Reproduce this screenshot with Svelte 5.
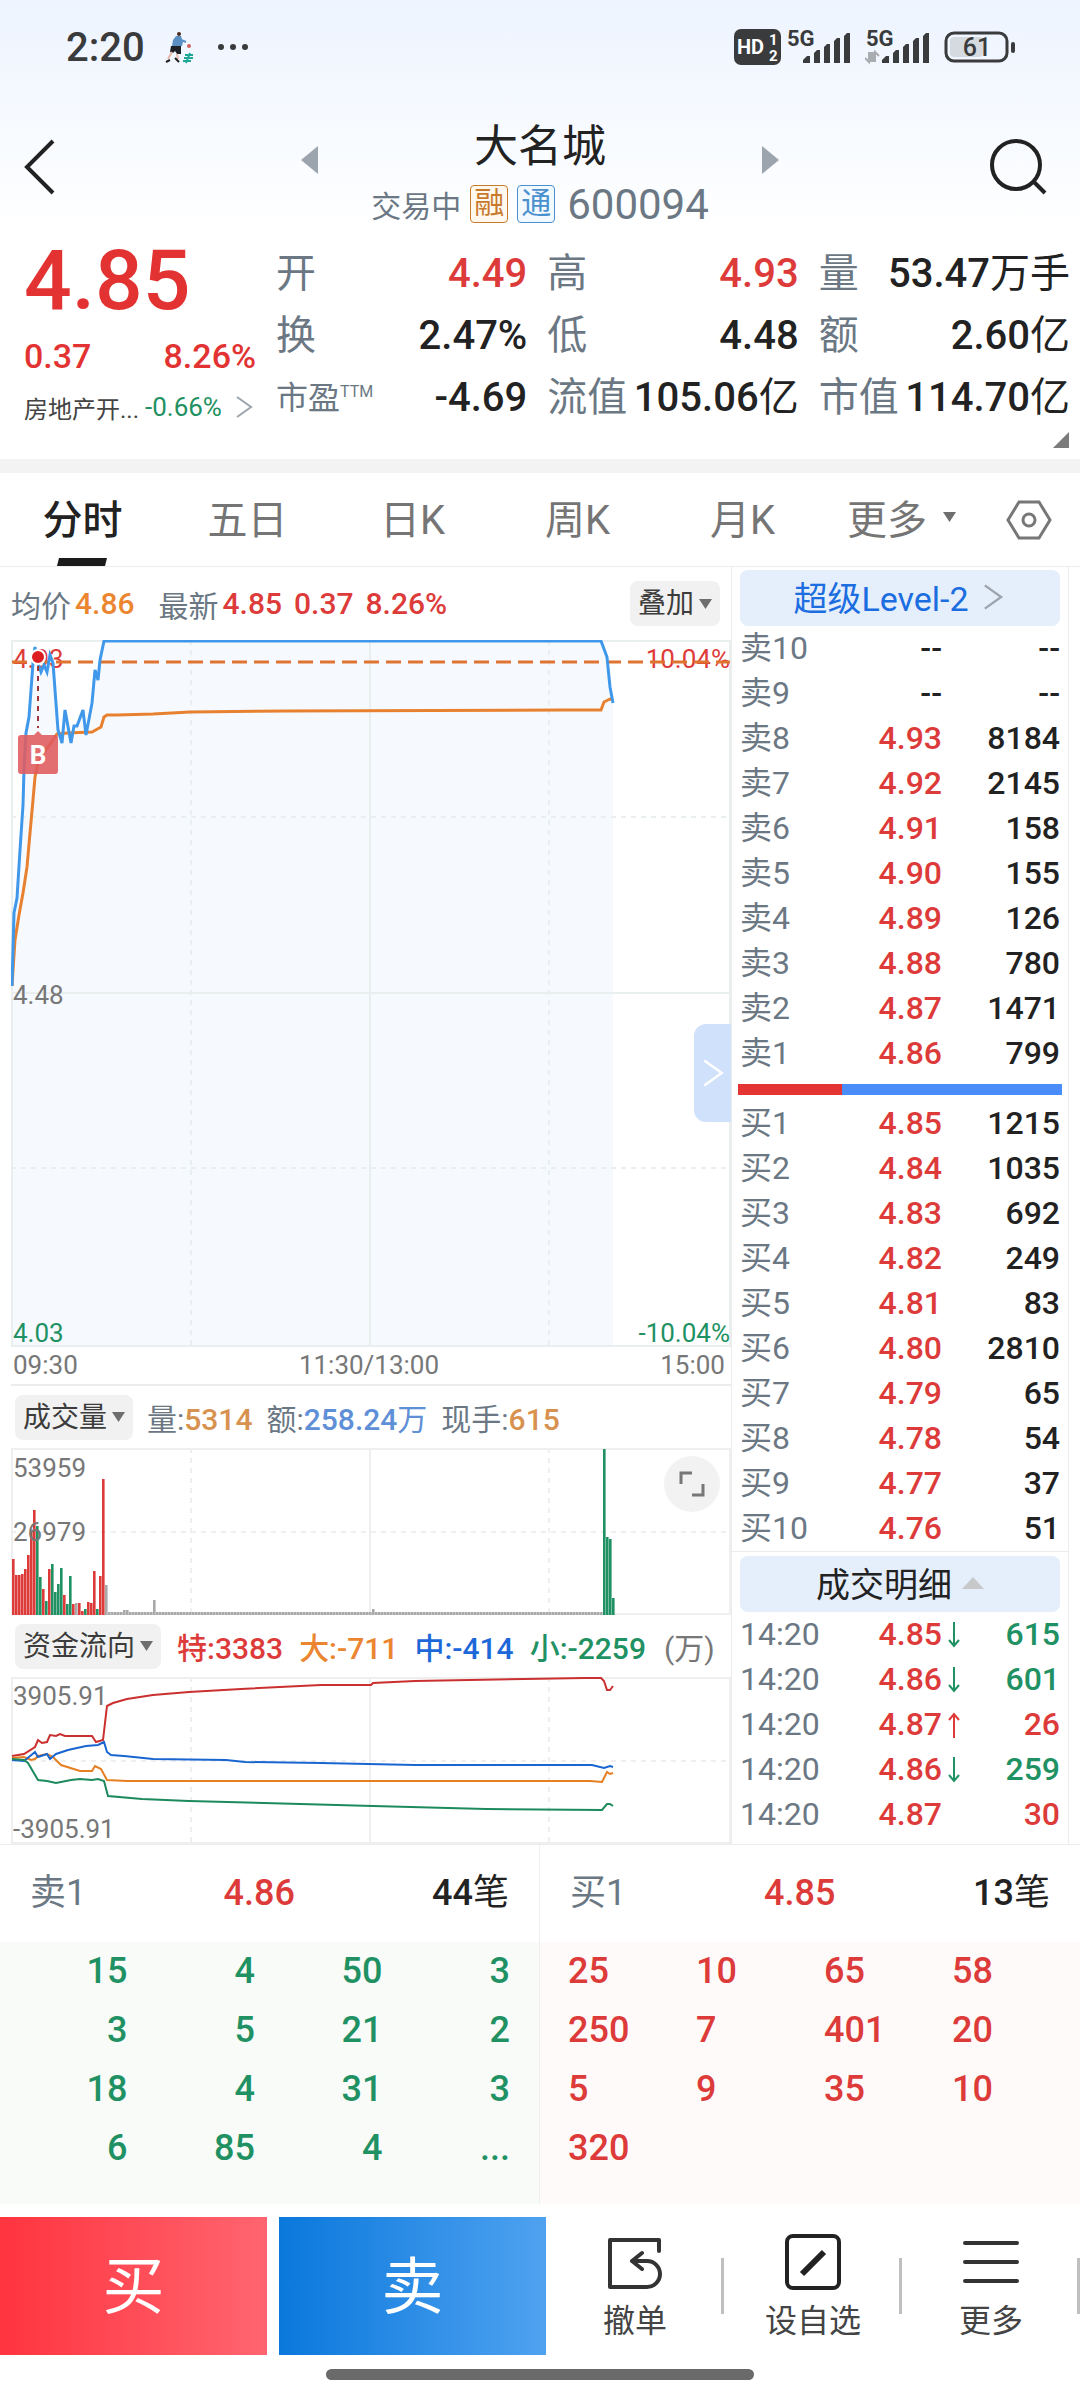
<script>
  const tabs = ['分时', '五日', '日K', '周K', '月K'];
  let activeTab = $state('分时');

  const stats = [
    { label: '开', value: '4.49', up: true },
    { label: '高', value: '4.93', up: true },
    { label: '量', value: '53.47', unit: '万手' },
    { label: '换', value: '2.47%' },
    { label: '低', value: '4.48' },
    { label: '额', value: '2.60', unit: '亿' },
    { label: '市盈', sup: 'TTM', value: '-4.69' },
    { label: '流值', value: '105.06', unit: '亿' },
    { label: '市值', value: '114.70', unit: '亿' }
  ];

  const asks = [
    ['卖10', '--', '--'],
    ['卖9', '--', '--'],
    ['卖8', '4.93', '8184'],
    ['卖7', '4.92', '2145'],
    ['卖6', '4.91', '158'],
    ['卖5', '4.90', '155'],
    ['卖4', '4.89', '126'],
    ['卖3', '4.88', '780'],
    ['卖2', '4.87', '1471'],
    ['卖1', '4.86', '799']
  ];

  const bids = [
    ['买1', '4.85', '1215'],
    ['买2', '4.84', '1035'],
    ['买3', '4.83', '692'],
    ['买4', '4.82', '249'],
    ['买5', '4.81', '83'],
    ['买6', '4.80', '2810'],
    ['买7', '4.79', '65'],
    ['买8', '4.78', '54'],
    ['买9', '4.77', '37'],
    ['买10', '4.76', '51']
  ];

  const trades = [
    { time: '14:20', price: '4.85', dir: 'down', side: 'green', vol: '615' },
    { time: '14:20', price: '4.86', dir: 'down', side: 'green', vol: '601' },
    { time: '14:20', price: '4.87', dir: 'up', side: 'red', vol: '26' },
    { time: '14:20', price: '4.86', dir: 'down', side: 'green', vol: '259' },
    { time: '14:20', price: '4.87', dir: '', side: 'red', vol: '30' }
  ];

  const askQueue = ['15', '4', '50', '3', '3', '5', '21', '2', '18', '4', '31', '3', '6', '85', '4', '...'];
  const bidQueue = ['25', '10', '65', '58', '250', '7', '401', '20', '5', '9', '35', '10', '320'];
  const bidShare = 32;

  // Price and average lines, chart units
  const priceLine =
    '1,346 3,273 6,258 9,210 12,165 13,130 15,93 18,77 22,23 24,7 26,20 30,32 33,25 36,32 39,15 42,23 47,90 51,103 54,70 60,103 63,86 66,86 72,70 75,95 81,63 84,30 87,40 89,20 93,1 590,1 596,17 599,47 602,63';
  const avgLine =
    '1,346 4,300 8,275 12,253 16,227 19,193 22,160 24,137 27,123 32,113 37,107 46,94 56,93 81,92 90,87 93,77 96,75 106,75 142,74 179,72 275,71 552,70 590,70 593,62 599,59 602,60';

  const flows = [
    { color: '#c9302f', points: '1,79 13,77 24,70 27,63 31,66 36,65 39,58 45,59 49,57 54,59 81,59 85,65 92,63 96,29 102,26 116,22 142,18 178,15 230,12 310,8 360,8 362,6 404,4 513,2 574,1 590,1 593,4 596,13 599,13 602,9' },
    { color: '#e67e22', points: '1,81 13,80 20,83 24,82 27,79 36,77 42,80 50,88 69,94 81,94 84,89 90,92 96,103 116,104 579,104 591,105 596,95 599,97 602,96' },
    { color: '#1a66d0', points: '1,83 13,84 24,75 27,80 36,77 39,82 45,77 57,73 75,69 87,68 93,65 96,75 100,78 113,79 142,82 215,83 234,85 310,86 404,88 581,88 593,91 599,89 602,90' },
    { color: '#1c8a5c', points: '1,82 13,83 17,86 27,103 36,104 45,106 60,103 69,102 81,103 87,102 93,104 97,119 131,122 178,124 253,126 362,129 475,132 591,133 596,127 599,127 602,129' }
  ];

  const red = '#dd3b3a';
  const green = '#1f9163';
  const gray = '#a9a9a9';

  // One bar a minute: opening burst, the quiet limit-up stretch, then the break
  const opening = [
    [56, red], [40, red], [40, red], [41, red], [46, red], [60, red], [84, red], [105, red],
    [89, green], [38, green], [26, red], [14, green], [46, red], [51, green], [23, green], [31, green],
    [47, green], [20, red], [11, green], [39, green], [11, red], [12, gray], [12, red], [4, red],
    [6, green], [13, red], [12, red], [44, red], [6, green], [39, red], [136, red], [30, gray]
  ];
  const spikes = { 37: 5, 38: 5, 47: 15, 120: 6 };
  const closing = [[166, green], [78, green], [76, green], [17, green]];
  const bars = Array.from({ length: 201 }, (_, i) => {
    if (i < opening.length) return opening[i];
    if (i >= 197) return closing[i - 197];
    return [spikes[i] ?? 3, gray];
  });
</script>

{#snippet signal(data)}
  <svg width="66" height="48" viewBox="0 -6 66 48">
    <text x="1" y="17" class="net">5G</text>
    <path d="M17 34v-3l4-4h3v7zM28 34V24l3-3h3v13zM38 34V18l3-3h3v19zM48 34V12l3-3h3v25zM58 34V7l3-3h3v30z" fill="#3a3b3d" />
    {#if data}
      <path d="M4 23v10l-4-4M6 33V23M10 33V23l4 4M8 23v10" fill="none" stroke="#a9adb2" stroke-width="2" />
    {/if}
  </svg>
{/snippet}

{#snippet chevron(size, color)}
  <svg width={size} height={size} viewBox="0 0 24 24" fill="none" stroke={color} stroke-width="2">
    <path d="M5 2l14 10L5 22" />
  </svg>
{/snippet}

{#snippet caret()}
  <svg class="caret" width="13" height="10" viewBox="0 0 13 10" fill="#6e6e6e"><path d="M0 0h13L6.500 10z" /></svg>
{/snippet}

{#snippet level(row)}
  <tr>
    <th scope="row">{row[0]}</th>
    <td class="price" class:red={row[1] !== '--'}>{row[1]}</td>
    <td class="mark"></td>
    <td class="vol">{row[2]}</td>
  </tr>
{/snippet}

<main class="page">
  <header class="top">
    <div class="status">
      <span class="clock">2:20</span>
      <svg class="runner" width="30" height="34" viewBox="0 0 30 34">
        <circle cx="14" cy="4" r="2" fill="#4b2a22" />
        <path d="M11 6h5l2 6-1 4H7l1-6z" fill="#5b8fc4" />
        <path d="M16 10l5 2" stroke="#5b8fc4" stroke-width="2" />
        <path d="M6 16h10v8h-4l-2-3-2 2-3-1z" fill="#1f2025" />
        <path d="M7 22l-4 7M12 24l1 5" stroke="#e3b8a8" stroke-width="2" />
        <path d="M1 32l4-2M10 28l4 4" stroke="#222" stroke-width="2" />
        <circle cx="24" cy="16" r="2" fill="#d2605e" />
        <path d="M20 25h8M19 28h9M18 31h8M25 23l-4 10" stroke="#1fa896" stroke-width="2" />
      </svg>
      <svg class="dots" width="32" height="8" viewBox="0 0 32 8" fill="#3a3b3d">
        <circle cx="4" cy="4" r="3" /><circle cx="16" cy="4" r="3" /><circle cx="28" cy="4" r="3" />
      </svg>
      <div class="radios">
        <svg width="47" height="36" viewBox="0 0 47 36">
          <rect y="0" width="47" height="36" rx="7" fill="#3a3b3d" />
          <text x="3" y="25" class="hd">HD</text>
          <text x="35" y="16" class="hd-num">1</text>
          <text x="35" y="32" class="hd-num">2</text>
        </svg>
        {@render signal(false)}
        {@render signal(true)}
        <svg width="72" height="34" viewBox="0 0 72 34">
          <rect x="2" y="3" width="61" height="28" rx="8" fill="none" stroke="#3a3b3d" stroke-width="3" />
          <rect x="6" y="7" width="33" height="20" rx="4" fill="#d5dae0" />
          <rect x="67" y="12" width="4" height="11" rx="2" fill="#3a3b3d" />
          <text x="33" y="26" class="battery">61</text>
        </svg>
      </div>
    </div>

    <nav class="nav">
      <button class="icon-btn" aria-label="返回">
        <svg width="32" height="56" viewBox="0 0 32 56" fill="none" stroke="#222" stroke-width="4"><path d="M29 2L3 28l26 26" /></svg>
      </button>
      <div class="stock">
        <button class="step" aria-label="上一只">
          <svg width="17" height="28" viewBox="0 0 17 28" fill="#9ca4ad"><path d="M17 0v28L0 14z" /></svg>
        </button>
        <div class="names">
          <h1>大名城</h1>
          <p><span>交易中</span><span class="tag orange">融</span><span class="tag blue">通</span><span class="code">600094</span></p>
        </div>
        <button class="step" aria-label="下一只">
          <svg width="17" height="28" viewBox="0 0 17 28" fill="#9ca4ad"><path d="M0 0v28l17-14z" /></svg>
        </button>
      </div>
      <button class="icon-btn" aria-label="搜索">
        <svg width="58" height="56" viewBox="0 0 58 56" fill="none" stroke="#222" stroke-width="4"><circle cx="26" cy="26" r="24" /><path d="M43 42l12 12" /></svg>
      </button>
    </nav>

    <section class="quote">
      <div class="last">
        <strong>4.85</strong>
        <div class="change"><span>0.37</span><span>8.26%</span></div>
        <a class="sector" href="#sector">
          <span>房地产开...</span><span class="pct">-0.66%</span>{@render chevron(26, '#9ca4ad')}
        </a>
      </div>
      <dl class="stats">
        {#each stats as s}
          <div>
            <dt class:small={s.sup}>{s.label}{#if s.sup}<sup>{s.sup}</sup>{/if}</dt>
            <dd class:red={s.up}>{s.value}{#if s.unit}<span>{s.unit}</span>{/if}</dd>
          </div>
        {/each}
      </dl>
      <svg class="corner" width="16" height="16" viewBox="0 0 16 16" fill="#7b7b7b"><path d="M16 0v16H0z" /></svg>
    </section>
  </header>

  <nav class="tabs">
    {#each tabs as tab}
      <button class:active={activeTab === tab} onclick={() => (activeTab = tab)}>{tab}</button>
    {/each}
    <button class="more">更多 {@render caret()}</button>
    <button class="setting" aria-label="设置">
      <svg width="46" height="40" viewBox="0 0 46 40" fill="none" stroke="#777" stroke-width="3"><path d="M13 2h20l11 18-11 18H13L2 20z" /><circle cx="23" cy="20" r="6" /></svg>
    </button>
  </nav>

  <div class="board">
    <section class="charts">
      <div class="bar">
        <span class="muted">均价</span><b class="amber">4.86</b>
        <span class="muted newest">最新</span><b class="red">4.85</b><b class="red next">0.37</b><b class="red next">8.26%</b>
        <label class="pick right">
          <select aria-label="叠加"><option>叠加</option></select>{@render caret()}
        </label>
      </div>

      <div class="plot">
        <svg viewBox="0 0 720 707">
          <polygon points="{priceLine} 602,706 1,706" fill="#f6faff" />
          <g stroke="#e9eeee" stroke-width="2" fill="none">
            <rect x="1" y="1" width="718" height="705" />
            <path d="M359 0v707M0 353h720" />
            <path d="M180 0v707M538 0v707M0 177h720M0 528h720" stroke-dasharray="5 5" />
          </g>
          <text x="2" y="28" class="axis red">4.93</text>
          <text x="719" y="28" class="axis end red">10.04%</text>
          <text x="2" y="364" class="axis">4.48</text>
          <text x="2" y="702" class="axis green">4.03</text>
          <text x="719" y="702" class="axis end green">-10.04%</text>
          <path d="M1 22h718" stroke="#df7430" stroke-width="3" stroke-dasharray="15 7" />
          <polyline points={avgLine} fill="none" stroke="#e8812f" stroke-width="3" />
          <polyline points={priceLine} fill="none" stroke="#4098ea" stroke-width="3" />
          <path d="M27 26v62" stroke="#a03438" stroke-width="2" stroke-dasharray="5 5" />
          <circle cx="27" cy="17" r="7" fill="#dc1e22" stroke="#fff" stroke-width="2" />
          <path d="M10 95h13l4-4 4 4h13a3 3 0 0 1 3 3v33a3 3 0 0 1-3 3H10a3 3 0 0 1-3-3V98a3 3 0 0 1 3-3z" fill="#e05a5e" fill-opacity=".88" />
          <text x="27" y="124" class="flag">B</text>
        </svg>
        <button class="drawer" aria-label="收起盘口">{@render chevron(30, '#fff')}</button>
      </div>
      <div class="times"><span>09:30</span><span>11:30/13:00</span><span>15:00</span></div>

      <div class="bar indicator">
        <label class="pick">
          <select aria-label="指标"><option>成交量</option></select>{@render caret()}
        </label>
        <span class="muted">量:<b class="tan">5314</b></span>
        <span class="muted">额:<b class="sky">258.24<span>万</span></b></span>
        <span class="muted">现手:<b class="tan">615</b></span>
      </div>
      <div class="plot">
        <svg viewBox="0 0 720 167">
          <g stroke="#efefef" stroke-width="2" fill="none">
            <rect x="1" y="1" width="718" height="165" />
            <path d="M359 0v167" />
            <path d="M180 0v167M538 0v167M0 84h720" stroke-dasharray="5 5" />
          </g>
          {#each bars as [h, color], i}
            <rect x={1 + i * 3} y={167 - h} width="2.600" height={h} fill={color} />
          {/each}
          <text x="2" y="29" class="axis">53959</text>
          <text x="2" y="93" class="axis">26979</text>
        </svg>
        <button class="expand" aria-label="全屏">
          <svg width="26" height="26" viewBox="0 0 26 26" fill="none" stroke="#777" stroke-width="3"><path d="M2 13V2h11M13 24h11V13" /></svg>
        </button>
      </div>

      <div class="bar indicator">
        <label class="pick">
          <select aria-label="指标"><option>资金流向</option></select>{@render caret()}
        </label>
        <b class="red">特:3383</b>
        <b class="amber">大:-711</b>
        <b class="blue">中:-414</b>
        <b class="green">小:-2259</b>
        <span class="unit">(万)</span>
      </div>
      <div class="plot">
        <svg viewBox="0 0 720 167">
          <g stroke="#efefef" stroke-width="2" fill="none">
            <rect x="1" y="1" width="718" height="165" />
            <path d="M359 0v167" />
            <path d="M180 0v167M538 0v167M0 84h720" stroke-dasharray="5 5" />
          </g>
          <text x="2" y="28" class="axis">3905.91</text>
          <text x="2" y="161" class="axis">-3905.91</text>
          {#each flows as f}
            <polyline points={f.points} fill="none" stroke={f.color} stroke-width="2" />
          {/each}
        </svg>
      </div>
    </section>

    <aside class="book">
      <button class="strip level2">超级Level-2 {@render chevron(28, '#9ca4ad')}</button>
      <table>
        <tbody>
          {#each asks as row}{@render level(row)}{/each}
        </tbody>
      </table>
      <div class="ratio"><i style="width: {bidShare}%"></i></div>
      <table>
        <tbody>
          {#each bids as row}{@render level(row)}{/each}
        </tbody>
      </table>
      <div class="detail">
        <button class="strip">成交明细 <svg width="22" height="12" viewBox="0 0 22 12" fill="#c6c8ca"><path d="M11 0l11 12H0z" /></svg></button>
        <table>
          <tbody>
            {#each trades as t}
              <tr>
                <th scope="row">{t.time}</th>
                <td class="price red">{t.price}</td>
                <td class="mark">
                  {#if t.dir}
                    <svg class={t.dir} width="12" height="26" viewBox="0 0 12 26" fill="none" stroke-width="2"><path d="M6 0v24M1 18l5 6 5-6" /></svg>
                  {/if}
                </td>
                <td class="vol {t.side}">{t.vol}</td>
              </tr>
            {/each}
          </tbody>
        </table>
      </div>
    </aside>
  </div>

  <div class="queues">
    <section class="queue asks">
      <header><span class="muted">卖1</span><b class="red">4.86</b><b>44<span>笔</span></b></header>
      <ul>{#each askQueue as q}<li>{q}</li>{/each}</ul>
    </section>
    <section class="queue bids">
      <header><span class="muted">买1</span><b class="red">4.85</b><b>13<span>笔</span></b></header>
      <ul>{#each bidQueue as q}<li>{q}</li>{/each}</ul>
    </section>
  </div>

  <footer>
    <div class="actions">
      <button class="trade buy">买</button>
      <button class="trade sell">卖</button>
      <div class="tools">
        <button>
          <svg width="58" height="58" viewBox="0 0 58 58" fill="none" stroke="#333" stroke-width="4" stroke-linecap="round" stroke-linejoin="round"><path d="M53 18V7H4v47h37a13 13 0 0 0 0-26H26M36 20l-10 8 10 8" /></svg>
          撤单
        </button>
        <button>
          <svg width="58" height="58" viewBox="0 0 58 58" fill="none" stroke="#222" stroke-width="4"><rect x="3" y="3" width="52" height="52" rx="6" /><path d="M18 41L40 19" stroke-width="6" /></svg>
          设自选
        </button>
        <button>
          <svg width="58" height="58" viewBox="0 0 58 58" stroke="#333" stroke-width="4" stroke-linecap="round"><path d="M3 10h52M3 29h52M3 48h52" /></svg>
          更多
        </button>
      </div>
    </div>
    <div class="home"></div>
  </footer>
</main>

<style>
  :global(body) {
    background: #fff;
  }

  .page {
    font-family: Roboto, "Noto Sans CJK SC", sans-serif;
    color: #222;
    background: #fff;
  }

  button,
  select {
    font: inherit;
    color: inherit;
    background: none;
    border: none;
    padding: 0;
    margin: 0;
  }

  svg { display: block; }
  h1, p, dl, dd, ul { margin: 0; padding: 0; }
  a { color: inherit; text-decoration: none; }
  b { font-weight: 500; }
  b span, dd span { font-weight: 400; }

  .red { color: #dd3b3a; fill: #dd3b3a; }
  .green { color: #1f9163; fill: #1f9163; }
  .amber { color: #ec852f; }
  .blue { color: #1d68d8; }
  .tan { color: #d8924f; }
  .sky { color: #5f8fd6; }
  .muted { color: #6b7884; }

  /* Header */
  .top {
    background: linear-gradient(#edf4ff, #fff 230px);
  }

  .status {
    display: flex;
    align-items: center;
    height: 94px;
    padding: 0 64px 0 66px;
  }

  .clock {
    font-size: 40px;
    font-weight: 500;
    color: #3a3b3d;
  }

  .runner { margin-left: 20px; }
  .dots { margin-left: 22px; }

  .radios {
    display: flex;
    align-items: center;
    gap: 13px;
    margin-left: auto;
  }

  .radios svg:first-child { margin-right: -8px; }

  .net { font-size: 22px; font-weight: 700; fill: #3a3b3d; }
  .hd { font-size: 20px; font-weight: 700; fill: #fff; }
  .hd-num { font-size: 15px; font-weight: 700; fill: #fff; }
  .battery { font-size: 25px; font-weight: 500; fill: #3a3b3d; text-anchor: middle; }

  .nav {
    display: flex;
    justify-content: space-between;
    align-items: flex-start;
    height: 149px;
    padding: 0 24px;
  }

  .icon-btn {
    width: 66px;
    height: 146px;
    display: flex;
    align-items: center;
  }

  .stock {
    display: flex;
    justify-content: space-between;
    width: 478px;
  }

  .step {
    height: 132px;
    display: flex;
    align-items: center;
  }

  .names {
    padding-top: 23px;
    text-align: center;
  }

  h1 {
    font-size: 44px;
    font-weight: 400;
    line-height: 60px;
  }

  .names p {
    display: flex;
    align-items: center;
    height: 54px;
    font-size: 30px;
    color: #6b7884;
  }

  .tag {
    width: 36px;
    height: 36px;
    margin-left: 9px;
    border: 1px solid;
    border-radius: 4px;
    font-size: 30px;
    line-height: 34px;
    text-align: center;
  }

  .tag.orange { color: #c87a2c; background: #fff8ee; }
  .tag.blue { color: #4a90cf; background: #f2f9ff; }

  .code {
    margin-left: 12px;
    font-size: 42px;
  }

  .quote {
    position: relative;
    display: grid;
    grid-template-columns: 232px 1fr;
    gap: 20px;
    height: 216px;
    padding: 0 10px 0 24px;
  }

  .last { color: #e23332; }

  .last strong {
    display: block;
    font-size: 84px;
    font-weight: 500;
    line-height: 76px;
  }

  .change {
    display: flex;
    justify-content: space-between;
    margin-top: 12px;
    font-size: 34px;
    font-weight: 500;
    line-height: 50px;
  }

  .sector {
    display: flex;
    align-items: center;
    height: 52px;
    font-size: 24px;
    color: #444;
    white-space: nowrap;
  }

  .pct {
    margin: 0 10px 0 6px;
    font-size: 26px;
    color: #1f9163;
  }

  .stats {
    display: grid;
    grid-template-columns: repeat(3, 1fr);
    column-gap: 20px;
    align-content: start;
  }

  .stats div {
    display: flex;
    justify-content: space-between;
    font-size: 40px;
    line-height: 62px;
    white-space: nowrap;
  }

  dt { color: #6b7884; }
  dt.small { font-size: 32px; }
  dd { font-weight: 500; }

  sup {
    font-size: 16px;
    line-height: 16px;
    vertical-align: 12px;
  }

  .corner {
    position: absolute;
    right: 11px;
    bottom: 11px;
  }

  /* Period tabs */
  .tabs {
    display: flex;
    height: 93px;
    padding-right: 26px;
    border-top: 14px solid #f3f3f3;
    border-bottom: 1px solid #ececec;
    font-size: 40px;
    color: #757575;
  }

  .tabs button {
    position: relative;
    width: 165px;
    padding-bottom: 5px;
  }

  .tabs .active {
    font-weight: 500;
    color: #222;
  }

  .tabs .active::after {
    content: "";
    position: absolute;
    left: 58px;
    bottom: 0;
    width: 48px;
    height: 8px;
    background: #1b1b1b;
    transform: skewX(-14deg);
  }

  .tabs .more {
    flex: 1;
    display: flex;
    align-items: center;
    gap: 16px;
    padding-left: 22px;
  }

  .tabs .setting {
    width: 48px;
    padding: 0;
    display: flex;
    align-items: center;
  }

  /* Charts */
  .board {
    display: grid;
    grid-template-columns: minmax(0, 1fr) 349px;
  }

  .charts { padding-left: 11px; }

  .bar {
    display: flex;
    align-items: center;
    height: 73px;
    font-size: 30px;
    white-space: nowrap;
  }

  .bar .muted + b { margin-left: 4px; }
  .bar .newest { margin-left: 24px; }
  .bar .next { margin-left: 12px; }

  .indicator {
    height: 62px;
    gap: 14px;
    padding-left: 4px;
  }

  .indicator > b { margin-left: 2px; }
  .unit { margin-left: 4px; color: #777; }

  .pick {
    display: flex;
    align-items: center;
    gap: 4px;
    height: 45px;
    padding: 0 8px;
    border-radius: 8px;
    background: #f1f1f1;
    font-size: 28px;
    color: #3c3c3c;
  }

  .pick select {
    appearance: none;
    line-height: 45px;
  }

  .right { margin: 0 11px 0 auto; }

  .plot { position: relative; }
  .plot > svg { width: 100%; height: auto; }

  .axis { font-size: 26px; }
  .axis:not(.red):not(.green) { fill: #777; }
  .end { text-anchor: end; }

  .flag {
    font-size: 26px;
    font-weight: 700;
    fill: #fff;
    text-anchor: middle;
  }

  .drawer {
    position: absolute;
    right: 0;
    top: 384px;
    width: 37px;
    height: 98px;
    border-radius: 12px 0 0 12px;
    background: #d0e1fb;
    display: flex;
    align-items: center;
    justify-content: center;
  }

  .expand {
    position: absolute;
    right: 11px;
    top: 8px;
    width: 56px;
    height: 56px;
    border-radius: 50%;
    background: #f2f2f2;
    display: flex;
    align-items: center;
    justify-content: center;
  }

  .times {
    display: flex;
    justify-content: space-between;
    padding: 0 6px 0 2px;
    border-bottom: 2px solid #ececec;
    font-size: 26px;
    line-height: 37px;
    color: #777;
  }

  /* Order book */
  .book {
    margin-right: 11px;
    padding: 3px 8px 0;
    border: solid #ececec;
    border-width: 0 1px;
  }

  .strip {
    display: flex;
    align-items: center;
    justify-content: center;
    gap: 10px;
    width: 100%;
    height: 56px;
    padding-bottom: 3px;
    border-radius: 8px;
    background: #e5effc;
    font-size: 34px;
  }

  .level2 { color: #1b6de0; }

  table {
    width: 100%;
    table-layout: fixed;
    border-collapse: collapse;
    font-size: 32px;
  }

  tr { height: 45px; }
  th, td { padding: 0; line-height: 45px; white-space: nowrap; }

  th {
    width: 110px;
    font-weight: 400;
    text-align: left;
    color: #6b7884;
  }

  td { font-weight: 500; text-align: right; }
  .price { width: 92px; }
  .mark { width: 26px; }
  .mark svg { margin-left: 6px; }
  .down { stroke: #1f9163; }
  .up { stroke: #dd3b3a; transform: rotate(180deg); }

  .ratio {
    height: 11px;
    margin: 8px -2px 6px;
    background: #4a8cfa;
  }

  .ratio i {
    display: block;
    height: 100%;
    background: #e53434;
  }

  .detail {
    margin: 0 -8px;
    padding: 4px 8px 0;
    border-top: 1px solid #ececec;
  }

  /* Queues */
  .queues {
    display: grid;
    grid-template-columns: 1fr 1fr;
    border-top: 1px solid #ececec;
  }

  .asks { border-right: 1px solid #efefef; }

  .queue header {
    display: flex;
    justify-content: space-between;
    padding: 0 30px;
    font-size: 36px;
    line-height: 97px;
  }

  .queue ul {
    display: grid;
    grid-template-columns: repeat(4, 1fr);
    height: 262px;
    align-content: start;
    list-style: none;
    font-size: 36px;
    font-weight: 500;
    line-height: 59px;
  }

  .asks ul {
    padding-right: 29px;
    text-align: right;
    color: #1f9163;
    background: #f8fbf8;
  }

  .bids ul {
    padding-left: 28px;
    color: #dd3b3a;
    background: #fefaf9;
  }

  /* Bottom bar */
  .actions {
    display: flex;
    height: 138px;
    padding-top: 13px;
  }

  .trade {
    width: 267px;
    margin-right: 12px;
    padding-bottom: 8px;
    font-size: 62px;
    color: #fff;
  }

  .buy { background: linear-gradient(90deg, #ff343f, #ff6570); }
  .sell { margin-right: 0; background: linear-gradient(90deg, #0a78dc, #4fa2f0); }

  .tools {
    flex: 1;
    display: grid;
    grid-template-columns: repeat(3, 1fr);
  }

  .tools button {
    position: relative;
    display: flex;
    flex-direction: column;
    align-items: center;
    padding-top: 16px;
    font-size: 32px;
    line-height: 60px;
    color: #444;
  }

  .tools button::after {
    content: "";
    position: absolute;
    right: 0;
    top: 41px;
    width: 3px;
    height: 56px;
    background: #bfbfbf;
  }

  .home {
    width: 428px;
    height: 11px;
    margin: 14px auto 20px;
    border-radius: 6px;
    background: #6a6a6a;
  }
</style>
